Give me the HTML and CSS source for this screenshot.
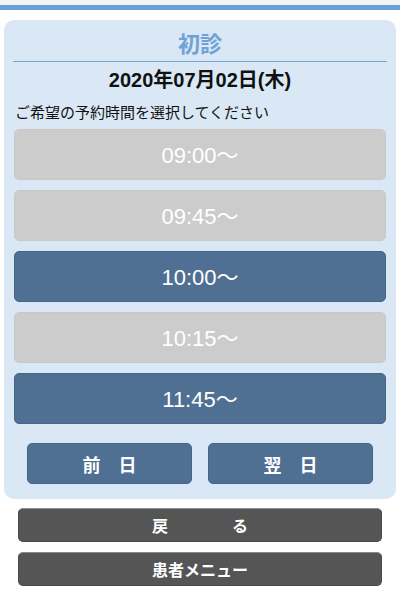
FILE: index.html
```html
<!DOCTYPE html>
<html lang="ja">
<head>
    <meta charset="UTF-8">
    <meta name="viewport" content="width=device-width, initial-scale=1.0">
    <title>初診 予約時間選択</title>
    <link rel="stylesheet" href="styles.css">
</head>
<body>

<div class="topbar"></div>

<div class="card">
    <h2 class="title">初診</h2>
    <div class="date">2020年07月02日(木)</div>
    <p class="lead">ご希望の予約時間を選択してください</p>

    <div class="slots">
        <button class="slot full">09:00〜</button>
        <button class="slot full">09:45〜</button>
        <button class="slot open">10:00〜</button>
        <button class="slot full">10:15〜</button>
        <button class="slot open">11:45〜</button>
    </div>

    <div class="nav">
        <button class="nav-btn">前　日</button>
        <button class="nav-btn">翌　日</button>
    </div>
</div>

<div class="footer-btns">
    <button class="dark-btn">戻　　　　る</button>
    <button class="dark-btn">患者メニュー</button>
</div>

</body>
</html>
```

FILE: styles.css
```css
* {
    box-sizing: border-box;
}
body {
    font-family: "Liberation Sans", "Noto Sans CJK JP", sans-serif;
    background-color: #ffffff;
    color: #111111;
    margin: 0;
}
button {
    font-family: inherit;
    cursor: pointer;
}
.topbar {
    height: 10px;
    background-color: #f5f5f5;
    border-bottom: 5px solid #6d9fd5;
}
.card {
    margin: 10px 4px 0;
    background-color: #dae8f5;
    border-radius: 10px;
    padding: 0 10px 15px;
}
.title {
    margin: 0 -1px;
    padding-top: 8px;
    line-height: 33px;
    font-size: 22px;
    font-weight: bold;
    text-align: center;
    color: #6fa3d6;
    border-bottom: 1px solid #78a6d6;
}
.date {
    line-height: 36px;
    font-size: 20px;
    font-weight: bold;
    text-align: center;
}
.lead {
    margin: 0 0 1px;
    padding-left: 1px;
    line-height: 30px;
    font-size: 15px;
}
.slots {
    display: flex;
    flex-direction: column;
    gap: 10px;
}
.slot {
    height: 51px;
    padding-bottom: 4px;
    border-radius: 5px;
    font-size: 22px;
    color: #ffffff;
    border: 1px solid transparent;
}
.slot.full {
    background-color: #cccccc;
    border-color: #c8c8c8;
}
.slot.open {
    background-color: #4f7092;
    border-color: #44668a;
}
.nav {
    display: flex;
    gap: 16px;
    margin-top: 19px;
    padding: 0 13px;
}
.nav-btn {
    flex: 1;
    height: 41px;
    border-radius: 5px;
    background-color: #4f7092;
    border: 1px solid #44668a;
    color: #ffffff;
    font-size: 18px;
    font-weight: bold;
}
.footer-btns {
    display: flex;
    flex-direction: column;
    gap: 10px;
    margin: 9px 18px 0;
}
.dark-btn {
    height: 34px;
    border-radius: 5px;
    background-color: #555555;
    border: 1px solid #4a4a4a;
    border-top-color: #8c8c8c;
    color: #ffffff;
    font-size: 16px;
    font-weight: bold;
}
```
